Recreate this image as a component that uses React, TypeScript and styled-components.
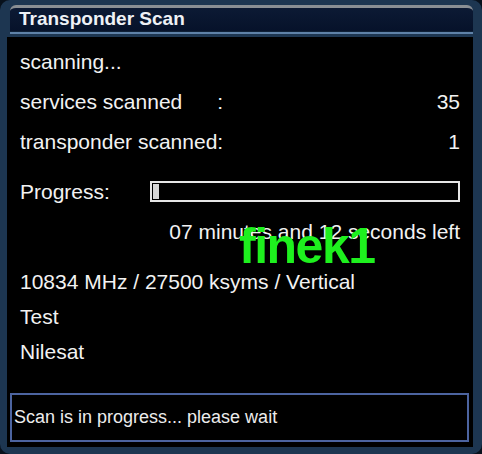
import React from "react";
import styled, { createGlobalStyle } from "styled-components";

const GlobalStyle = createGlobalStyle`
  html, body {
    margin: 0;
    padding: 0;
    background: #08111c;
  }
`;

const App: React.FC = () => {
  return (
    <>
      <GlobalStyle />
      <Window>
        <TitleBar>
          <Title>Transponder Scan</Title>
        </TitleBar>
        <Content>
          <Body>
            <Line $top={12}>scanning...</Line>
            <Line $top={15}>
              <Label>services scanned</Label>
              <Colon>:</Colon>
              <Value>35</Value>
            </Line>
            <Line $top={15}>
              <Label>transponder scanned:</Label>
              <Value>1</Value>
            </Line>
            <Line $top={25}>
              <Label>Progress:</Label>
              <ProgressBar>
                <ProgressFill style={{ width: "2%" }} />
              </ProgressBar>
            </Line>
            <Line $top={15}>
              <Value>07 minutes and 12 seconds left</Value>
            </Line>
            <Line $top={25}>10834 MHz / 27500 ksyms / Vertical</Line>
            <Line $top={10}>Test</Line>
            <Line $top={10}>Nilesat</Line>
            <Watermark>finek1</Watermark>
          </Body>
          <MessageBox>Scan is in progress... please wait</MessageBox>
        </Content>
      </Window>
    </>
  );
};

export default App;

const Window = styled.div`
  width: 482px;
  height: 454px;
  box-sizing: border-box;
  background: #1d3651;
  border-radius: 10px;
  padding: 5px 9px 7px 7px;
  display: flex;
  flex-direction: column;
  font-family: "Liberation Sans", "DejaVu Sans", sans-serif;
`;

const TitleBar = styled.div`
  height: 27px;
  margin: 0 0 0 3px;
  box-sizing: border-box;
  border-top: 3px solid #8a8f94;
  border-radius: 6px 6px 0 0;
  background: linear-gradient(#0c1a34, #06122a);
  display: flex;
  align-items: center;
  padding-left: 9px;
  border-bottom: 1px solid #0f2036;
  box-shadow: 0 2px 0 #5f82a8;
`;

const Title = styled.div`
  color: #eef1f6;
  font-size: 19px;
  font-weight: 700;
  margin-top: -1px;
`;

const Content = styled.div`
  flex: 1;
  margin-top: 5px;
  background: #000;
  display: flex;
  flex-direction: column;
  padding: 0 4px 5px 3px;
`;

const Body = styled.div`
  flex: 1;
  position: relative;
  padding: 0 9px 0 10px;
  color: #f2f2f2;
  font-size: 21px;
`;

const Line = styled.div<{ $top: number }>`
  display: flex;
  align-items: center;
  height: 25px;
  margin-top: ${(p) => p.$top}px;
  white-space: nowrap;
`;

const Label = styled.span`
  flex: none;
`;

const Colon = styled.span`
  margin-left: 35px;
`;

const Value = styled.span`
  margin-left: auto;
`;

const ProgressBar = styled.div`
  margin-left: auto;
  width: 310px;
  height: 21px;
  box-sizing: border-box;
  border: 2px solid #e6e6e6;
  background: #000;
  padding: 1px;
  display: flex;
`;

const ProgressFill = styled.div`
  background: #d8d8d8;
  height: 100%;
`;

const Watermark = styled.div`
  position: absolute;
  left: 229px;
  top: 180px;
  color: #1ef01e;
  font-family: "Liberation Sans", sans-serif;
  font-weight: 700;
  font-size: 50px;
  letter-spacing: -1.5px;
`;

const MessageBox = styled.div`
  height: 49px;
  box-sizing: border-box;
  border: 2px solid #4c64a0;
  display: flex;
  align-items: center;
  padding-left: 2px;
  color: #ececec;
  font-size: 18px;
`;
